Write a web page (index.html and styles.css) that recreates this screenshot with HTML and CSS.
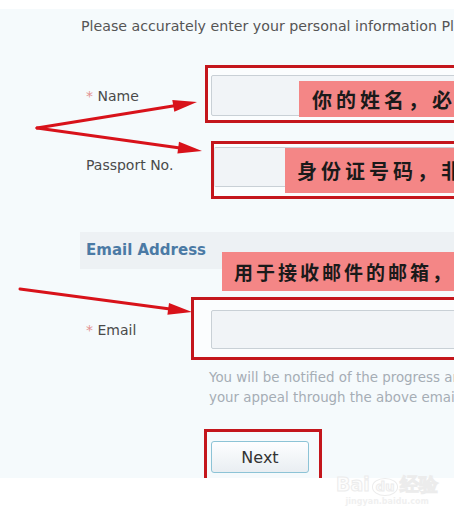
FILE: index.html
```html
<!DOCTYPE html>
<html lang="en">
<head>
<meta charset="utf-8">
<title>Appeal form</title>
<link rel="stylesheet" href="styles.css">
</head>
<body>
<div class="page">
  <div class="panel">
    <p class="intro">Please accurately enter your personal information Please make sure</p>

    <div class="row row-name">
      <label class="label label-name"><span class="req">*</span> Name</label>
      <div class="mark mark-name">
        <div class="field"></div>
        <span class="note note-name">你的姓名，必须填写</span>
      </div>
    </div>

    <div class="row row-passport">
      <label class="label label-passport">Passport No.</label>
      <div class="mark mark-passport">
        <div class="field field-passport"></div>
        <span class="note note-passport">身份证号码，非必填</span>
      </div>
    </div>

    <h3 class="section">Email Address</h3>

    <div class="row row-email">
      <label class="label label-email"><span class="req">*</span> Email</label>
      <div class="mark mark-email">
        <div class="field field-email"></div>
        <span class="note note-email">用于接收邮件的邮箱，必填</span>
      </div>
    </div>

    <p class="help">You will be notified of the progress and result of<br>your appeal through the above email address.</p>

    <div class="mark mark-next">
      <button class="btn" type="button">Next</button>
    </div>
  </div>
  <div class="footer"></div>

  <div class="watermark">
    <span class="wm-logo">Bai<span class="wm-du">du</span>经验</span>
    <span class="wm-url">jingyan.baidu.com</span>
  </div>

  <svg class="arrows" width="454" height="524" viewBox="0 0 454 524">
    <g stroke="#d8121a" stroke-width="3" stroke-linecap="round" fill="none">
      <line x1="37" y1="128" x2="176" y2="105.5"/>
      <line x1="37" y1="128" x2="180" y2="148"/>
      <line x1="20" y1="289" x2="170" y2="309"/>
    </g>
    <g fill="#d8121a">
      <polygon points="197,102 174.3,111.7 172.3,99.9"/>
      <polygon points="202,151 177.4,153.6 179,141.8"/>
      <polygon points="192,312 167.4,314.8 169,302.9"/>
    </g>
  </svg>
</div>
</body>
</html>
```

FILE: styles.css
```css
* { box-sizing: border-box; }

html, body {
  margin: 0;
  padding: 0;
  background: #ffffff;
}

body {
  font-family: "DejaVu Sans", Verdana, sans-serif;
  color: #444;
}

.page {
  position: relative;
  width: 454px;
  height: 524px;
  overflow: hidden;
  padding-top: 9px;
  background: #ffffff;
}

.panel {
  height: 469px;
  overflow: hidden;
  background: #f5fafc;
  padding-top: 9px;
}

.intro {
  margin: 0 0 0 81px;
  font-size: 14.2px;
  line-height: 16px;
  color: #555;
  white-space: nowrap;
}

.row {
  display: flex;
  align-items: center;
  padding-left: 86px;
}

.label {
  flex: none;
  font-size: 14px;
  line-height: 16px;
  color: #4a4a4a;
  padding-top: 3px;
}

.req { color: #e29090; }

.label-name { width: 119px; }
.label-passport { width: 125px; padding-top: 0; margin-bottom: 10px; }
.label-email { width: 105px; }

.mark {
  position: relative;
  flex: none;
  width: 320px;
  border: 3px solid #c4161c;
  background: #fbfdfe;
}

.field {
  height: 41px;
  background: #f1f4f7;
  border: 1px solid #c9d0d6;
  border-radius: 2px;
}

.row-name { margin-top: 31px; }
.mark-name { padding: 7px 0 4px 3px; }

.row-passport { margin-top: 18px; }
.mark-passport { padding: 3px 0 9px 0; }
.field-passport { height: 40px; border-left-color: #e3e8ec; }

.row-email { margin-top: 28px; }
.mark-email { padding: 10px 0 8px 17px; }
.field-email { height: 39px; }

.note {
  position: absolute;
  background: #f48686;
  color: #1a1a1a;
  font-family: "Noto Sans CJK SC", sans-serif;
  font-weight: 700;
  white-space: nowrap;
  display: flex;
  align-items: center;
}

.note-name {
  left: 91px;
  top: 13px;
  height: 36px;
  padding-left: 13px;
  font-size: 20px;
  letter-spacing: 4px;
}

.note-passport {
  left: 71px;
  top: 4px;
  height: 45px;
  padding-left: 12px;
  font-size: 20px;
  letter-spacing: 4px;
}

.note-email {
  left: 28px;
  top: -48px;
  height: 39px;
  padding-left: 12px;
  font-size: 19px;
  letter-spacing: 3px;
}

.section {
  margin: 33px 0 0 80px;
  height: 37px;
  padding-left: 6px;
  background: #edf1f4;
  font-size: 15px;
  font-weight: 700;
  line-height: 37px;
  color: #4b7aa5;
}

.help {
  margin: 8px 0 0 209px;
  font-size: 13.4px;
  line-height: 20px;
  color: #a5adb5;
  white-space: nowrap;
}

.mark-next {
  width: 118px;
  margin: 21px 0 0 204px;
  padding: 9px 0 8px 4px;
  background: transparent;
}

.btn {
  display: block;
  width: 98px;
  height: 32px;
  padding: 0;
  border: 1px solid #8cc3d6;
  border-radius: 3px;
  background: linear-gradient(#fdfeff, #e9eef2);
  font-family: "DejaVu Sans", Verdana, sans-serif;
  font-size: 16px;
  color: #333;
}

.footer {
  height: 46px;
  background: #ffffff;
}

.watermark {
  position: absolute;
  left: 336px;
  top: 472px;
  display: flex;
  flex-direction: column;
  align-items: center;
  pointer-events: none;
}

.wm-logo {
  font-family: "DejaVu Sans", sans-serif;
  font-size: 19px;
  font-weight: 700;
  line-height: 24px;
  color: #fdfdfd;
  -webkit-text-stroke: 1px #ececec;
}

.wm-du {
  display: inline-block;
  font-size: 13px;
  line-height: 16px;
  padding: 0 3px;
  margin: 0 2px;
  border-radius: 50%;
  border: 1px solid #ececec;
}

.wm-url {
  font-size: 8px;
  line-height: 12px;
  font-weight: 700;
  color: #f0f0f0;
}

.arrows {
  position: absolute;
  left: 0;
  top: 0;
  pointer-events: none;
}
```
